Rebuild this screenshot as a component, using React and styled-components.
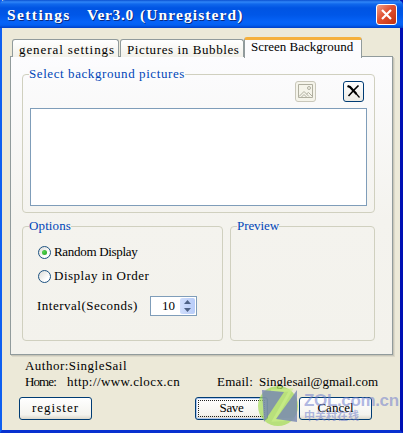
import React from 'react'
import styled, { createGlobalStyle } from 'styled-components'

let Global = createGlobalStyle`
    * { box-sizing: border-box; }
    body {
        margin: 0;
        font: 13px/14px "Liberation Serif", "Noto Sans CJK SC", serif;
        color: #000;
    }
    button { font: inherit; color: inherit; padding: 0; }
`

let Window = styled.div`
    position: relative;
    width: 403px;
    height: 433px;
    display: flex;
    flex-direction: column;
    background: #ece9d8;
    border: solid;
    border-width: 0 3px 3px 2px;
    border-color: #0831d9 #0010b4 #0831d0 #0f5ff0;
`

let TitleBar = styled.div`
    height: 28px;
    flex: none;
    margin: 0 -3px 0 -2px;
    padding: 4px 6px 0 7px;
    display: flex;
    justify-content: space-between;
    align-items: flex-start;
    border-radius: 5px 5px 0 0;
    background: linear-gradient(#0a50d0 0, #2f86f8 2px, #1068ec 4px, #0054e3 8px, #0057e8 15px, #0663f8 22px, #0360f2 25px, #0040c8 28px);
`

let Title = styled.div`
    display: flex;
    padding-top: 2px;
    font-size: 15.5px;
    line-height: 18px;
    font-weight: bold;
    color: white;
    text-shadow: 1px 1px 0 #0a2a80;
    white-space: nowrap;
`

let Word = styled.span`
    width: ${p => p.$w}px;
    flex: none;
    letter-spacing: ${p => p.$ls || 0}px;
`

let Text = styled.span`
    white-space: nowrap;
    letter-spacing: ${p => p.$ls || 0}px;
`

let CloseButton = styled.button`
    width: 21px;
    height: 21px;
    display: flex;
    align-items: center;
    justify-content: center;
    border: 1px solid #fff;
    border-radius: 3px;
    background: linear-gradient(135deg, #f0a088, #e05030 45%, #c03010);
`

let Tabs = styled.div`
    height: 29px;
    flex: none;
    display: flex;
    align-items: flex-end;
    padding-left: 10px;
    position: relative;
    z-index: 1;
`

let Tab = styled.div`
    width: ${p => p.$w}px;
    height: ${p => p.$active ? 21 : 18}px;
    margin-right: ${p => p.$gap || 0}px;
    margin-bottom: ${p => p.$active ? -1 : 0}px;
    padding: ${p => p.$active ? '0 0 0 6px' : '3px 0 0 6px'};
    border: 1px solid #919b9c;
    border-bottom: 0;
    border-top: ${p => p.$active ? '3px solid #f5b03c' : '1px solid #919b9c'};
    border-radius: 3px 3px 0 0;
    background: ${p => p.$active ? '#fcfcfe' : 'linear-gradient(#fff, #f2f1ea)'};
    overflow: hidden;
`

let Panel = styled.div`
    width: 383px;
    height: 299px;
    flex: none;
    margin: -1px 0 0 8px;
    padding: 17px 17px 0 11px;
    border: 1px solid #919b9c;
    background: linear-gradient(#fcfcfe, #f4f3ee 55%, #f3f2ec);
    box-shadow: 1px 1px 0 #c8c6b8, 2px 2px 0 #dcd9ca;
`

let Group = styled.section`
    width: ${p => p.$w}px;
    height: ${p => p.$h}px;
    border: 1px solid #d0d0bf;
    border-radius: 4px;
    display: flex;
    flex-direction: column;
`

let Legend = styled.div`
    height: 14px;
    margin: -8px 0 ${p => p.$mb || 0}px 6px;
    align-self: flex-start;
    background: ${p => p.$bg};
    color: #0046b8;
    white-space: nowrap;
    letter-spacing: ${p => p.$ls}px;
`

let Columns = styled.div`
    display: flex;
    gap: 7px;
    margin-top: 13px;
`

let Tools = styled.div`
    display: flex;
    justify-content: flex-end;
    gap: 27px;
    padding-right: 10px;
`

let ToolButton = styled.button`
    width: 21px;
    height: 21px;
    display: flex;
    align-items: center;
    justify-content: center;
    border: 1px solid ${p => p.disabled ? '#c9c7ba' : '#003c74'};
    border-radius: 3px;
    background: ${p => p.disabled ? '#f5f4ea' : 'linear-gradient(#fff, #ecebe5)'};
`

let List = styled.div`
    width: 337px;
    height: 98px;
    margin: 6px 0 0 7px;
    border: 1px solid #7f9db9;
    background: white;
`

let RadioRow = styled.label`
    height: 24px;
    padding-left: 15px;
    display: flex;
    align-items: center;
    gap: 3px;
`

let Radio = styled.span`
    width: 13px;
    height: 13px;
    display: flex;
    align-items: center;
    justify-content: center;
    border: 1px solid #1d5281;
    border-radius: 50%;
    background: linear-gradient(135deg, #dcdcd7, #fff 70%);

    &::after {
        content: "";
        width: 5px;
        height: 5px;
        border-radius: 50%;
        background: ${p => p.$on ? 'radial-gradient(circle at 35% 35%, #55d551, #21a121)' : 'none'};
    }
`

let Interval = styled.div`
    display: flex;
    align-items: center;
    padding: 8px 0 0 14px;
`

let Spinner = styled.div`
    width: 47px;
    height: 20px;
    display: flex;
    justify-content: flex-end;
    align-items: center;
    gap: 5px;
    padding-right: 1px;
    border: 1px solid #7f9db9;
    background: white;
`

let Arrows = styled.div`
    width: 15px;
    height: 16px;
    display: flex;
    align-items: center;
    justify-content: center;
    border-radius: 2px;
    background: linear-gradient(90deg, #d0defc, #b8ccf8);
`

let About = styled.div`
    height: 42px;
    flex: none;
    padding: 3px 0 0 23px;
    line-height: 16px;
`

let Line = styled.div`
    display: flex;
    height: 16px;
    white-space: nowrap;
`

let Buttons = styled.div`
    display: flex;
    padding-left: 17px;
`

let Button = styled.button`
    width: 73px;
    height: 23px;
    margin-right: ${p => p.$gap || 0}px;
    padding-bottom: 1px;
    border: 1px solid #003c74;
    border-radius: 3px;
    background: linear-gradient(#fff, #f4f3ee 80%, #dcd8cc);
    box-shadow: ${p => p.$focus ? 'inset 0 0 0 1px #b0c8f0' : 'none'};
    outline: ${p => p.$focus ? '1px dotted #222' : 'none'};
    outline-offset: -4px;
`

let Watermark = styled.div`
    position: absolute;
    left: 255px;
    top: 385px;
    display: flex;
    gap: 5px;
    color: rgba(110, 125, 205, .55);
    font-family: "Liberation Sans", "Noto Sans CJK SC", sans-serif;
    pointer-events: none;
`

let Site = styled.div`
    padding-top: 7px;
    font-size: 17px;
    line-height: 18px;
    font-weight: bold;
    letter-spacing: -.35px;
    white-space: nowrap;
`

let SiteName = styled.div`
    font-size: 11px;
    line-height: 13px;
    letter-spacing: 0;
`

let CloseIcon = () => (
    <svg width="13" height="13" viewBox="0 0 13 13">
        <path d="M2 2L11 11M11 2L2 11" stroke="white" strokeWidth="2.2" />
    </svg>
)

let PictureIcon = () => (
    <svg width="15" height="15" viewBox="0 0 15 15" fill="none" stroke="#b0afa0">
        <path d="M.5 .5H14.5V13.5H.5Z" />
        <circle cx="11" cy="4" r="1.5" />
        <path d="M1 12.5L6 7.5L11 12.5M8.5 10L10.5 8.5L14 12M3.5 13L6 10.5L8.5 13" />
    </svg>
)

let DeleteIcon = () => (
    <svg width="15" height="15" viewBox="0 0 15 15" fill="none" stroke="black">
        <path d="M1.5 2L4 3L10.5 10" strokeWidth="2.2" />
        <path d="M10 9.5L13.5 13.5" strokeWidth="1.2" />
        <path d="M12.5 1.5L8 6L2.5 12" strokeWidth="1.6" />
    </svg>
)

let ZLogo = () => (
    <svg width="42" height="42" viewBox="0 0 42 42">
        <circle cx="21" cy="21" r="20" fill="#a4dc58" opacity=".72" />
        <path d="M14 6L34 5L17 35L38 34" fill="none" stroke="#cdf08c" strokeWidth="3" opacity=".6" />
        <path d="M5 5L27 7L7 37Z" fill="#7684b4" opacity=".8" />
        <path d="M40 5V37L19 34Z" fill="#7684b4" opacity=".8" />
    </svg>
)

export default function App() {
    return (
        <Window>
            <Global />
            <TitleBar>
                <Title>
                    <Word $w={80} $ls={1.4}>Settings</Word>
                    <Word $w={53} $ls={.65}>Ver3.0</Word>
                    <Word $w={106} $ls={1.1}>(Unregisterd)</Word>
                </Title>
                <CloseButton><CloseIcon /></CloseButton>
            </TitleBar>
            <Tabs>
                <Tab $w={107} $gap={1}><Text $ls={.92}>general settings</Text></Tab>
                <Tab $w={124}><Text $ls={.6}>Pictures in Bubbles</Text></Tab>
                <Tab $w={118} $active><Text>Screen Background</Text></Tab>
            </Tabs>
            <Panel>
                <Group $w={353} $h={139}>
                    <Legend $bg="#fbfbfc" $ls={.58}>Select background pictures</Legend>
                    <Tools>
                        <ToolButton disabled><PictureIcon /></ToolButton>
                        <ToolButton><DeleteIcon /></ToolButton>
                    </Tools>
                    <List />
                </Group>
                <Columns>
                    <Group $w={201} $h={115}>
                        <Legend $bg="#f4f3ee" $ls={.12} $mb={7}>Options</Legend>
                        <RadioRow><Radio $on /><Text $ls={-.3}>Random Display</Text></RadioRow>
                        <RadioRow><Radio /><Text $ls={.5}>Display in Order</Text></RadioRow>
                        <Interval>
                            <Word $w={113} $ls={.5}>Interval(Seconds)</Word>
                            <Spinner>
                                <span>10</span>
                                <Arrows>
                                    <svg width="9" height="12" viewBox="0 0 9 12" fill="#4d6185">
                                        <path d="M4.5 0L8 4H1ZM4.5 12L8 8H1Z" />
                                    </svg>
                                </Arrows>
                            </Spinner>
                        </Interval>
                    </Group>
                    <Group $w={145} $h={115}>
                        <Legend $bg="#f4f3ee" $ls={-.09}>Preview</Legend>
                    </Group>
                </Columns>
            </Panel>
            <About>
                <Line><Text $ls={.48}>Author:SingleSail</Text></Line>
                <Line>
                    <Word $w={42} $ls={-.9}>Home:</Word>
                    <Word $w={150} $ls={.41}>http://www.clocx.cn</Word>
                    <Word $w={42} $ls={.22}>Email:</Word>
                    <Word $w={120} $ls={.03}>Singlesail@gmail.com</Word>
                </Line>
            </About>
            <Buttons>
                <Button $gap={103}><Text $ls={1}>register</Text></Button>
                <Button $gap={31} $focus><Text $ls={-.3}>Save</Text></Button>
                <Button>Cancel</Button>
            </Buttons>
            <Watermark>
                <ZLogo />
                <Site>
                    ZOL.com.cn
                    <SiteName>中关村在线</SiteName>
                </Site>
            </Watermark>
        </Window>
    )
}
